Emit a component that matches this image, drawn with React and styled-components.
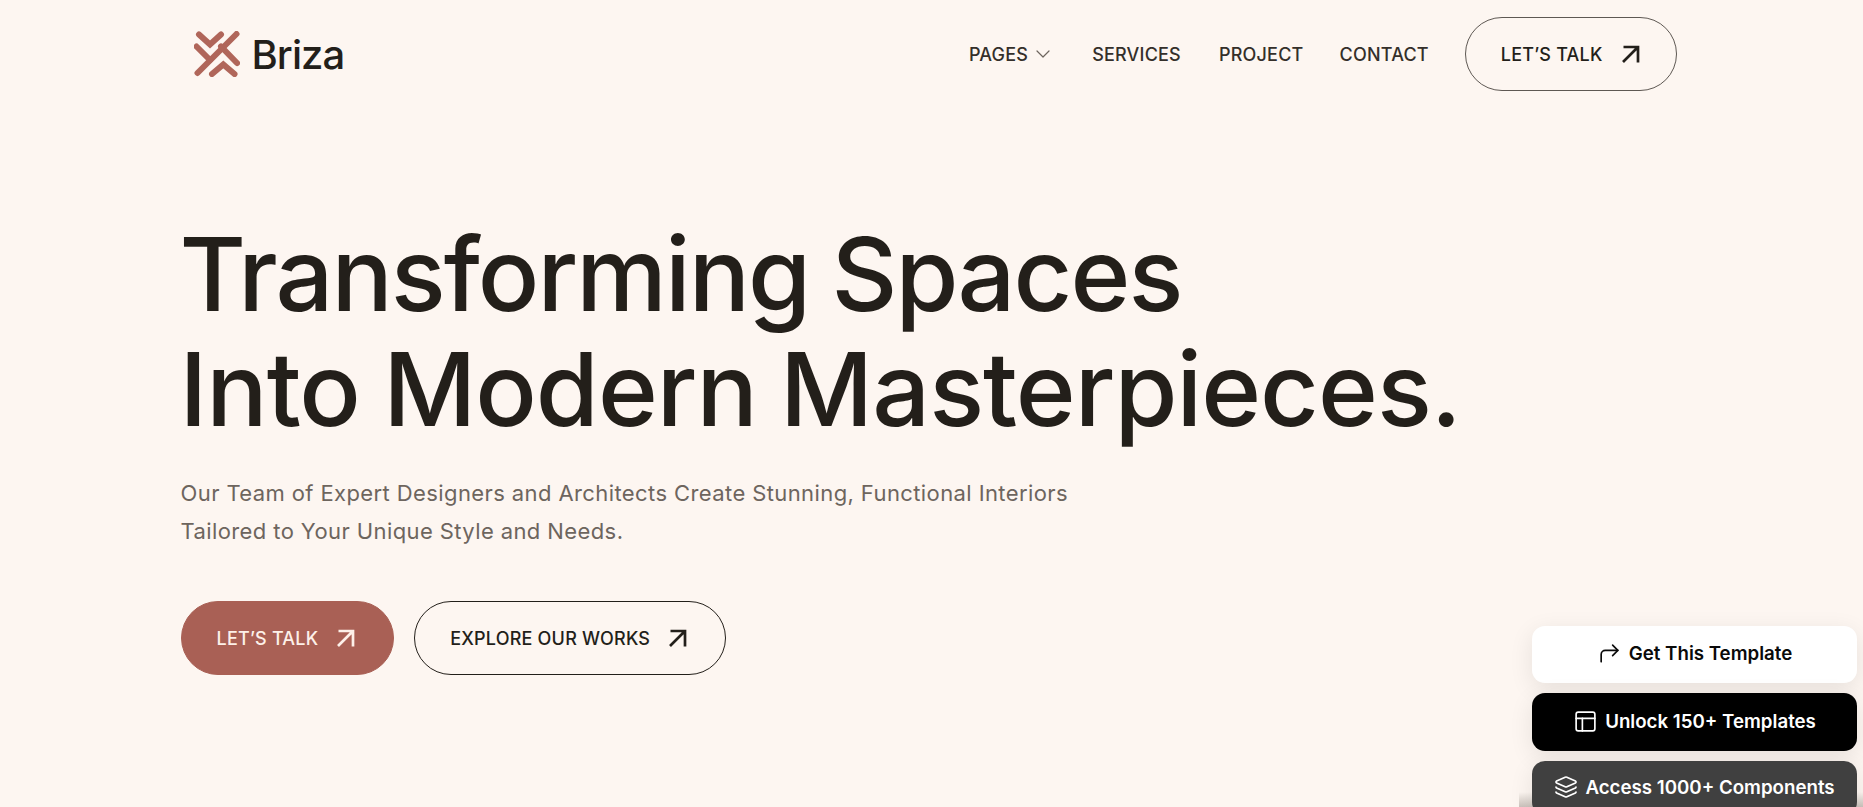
import React from "react";
import styled, { createGlobalStyle } from "styled-components";
import { ChevronDown, CornerUpRight, Layers, PanelsTopLeft } from "lucide-react";

const Global = createGlobalStyle`
  html, body { margin: 0; padding: 0; height: 807px; overflow: hidden; background: #fdf6f1; }
  #root { height: 807px; }
  * { box-sizing: border-box; }
`;
const Page = styled.div`
  position: relative; height: 807px; overflow: hidden; background: #fdf6f1; color: #231f1a;
  font-family: "Inter", "Liberation Sans", sans-serif;
`;
const Container = styled.div`width: 1502px; margin: 0 auto;`;
const Header = styled.header`
  height: 108px; display: flex; align-items: center; justify-content: space-between; padding: 0 6px 0 13px;
`;
const Brand = styled.div`display: flex; align-items: center; gap: 12px;`;
const BrandName = styled.span`font-size: 40px; font-weight: 500; letter-spacing: -0.9px; color: #231f1a;`;
const Nav = styled.nav`display: flex; align-items: center;`;
const NavLink = styled.a`
  display: flex; align-items: center; gap: 3px; font-size: 18px; font-weight: 500; letter-spacing: 0.2px;
  text-transform: uppercase; margin-right: ${p => p.$gap}px; color: #342f2a;
  svg { color: #6d655e; margin-right: -6px; }
`;
const Hero = styled.section`padding-top: 109px;`;
const Title = styled.h1`
  margin: 0 0 0 -1px; font-size: 102px; line-height: 115px; font-weight: 500; color: #231f1a;
`;
const TitleLine = styled.span`display: block; letter-spacing: ${p => p.$track}px; word-spacing: -3px;`;
const Lead = styled.p`
  margin: 27px 0 0; font-size: 22px; line-height: 38px; font-weight: 400; color: #6d655e; letter-spacing: 0.4px;
`;
const Actions = styled.div`display: flex; gap: 20px; margin-top: 51px;`;
const Pill = styled.a`
  height: 74px; display: inline-flex; align-items: center; gap: 19px; padding: 0 36px 0 35px; border-radius: 37px;
  font-size: 18px; font-weight: 500; letter-spacing: 0.2px; text-transform: uppercase;
  border: 1px solid ${p => p.$filled ? "#a96055" : p.$soft ? "#5e5853" : "#231f1a"};
  background: ${p => p.$filled ? "#a96055" : "transparent"}; color: ${p => p.$filled ? "#fdf0e9" : "#231f1a"};
`;
const ActionPill = styled(Pill)`padding: 0 38px 0 35px;`;
const Floating = styled.aside`
  position: absolute; left: 1532px; top: 626px; width: 325px; display: flex; flex-direction: column; gap: 10px;
  &::before {
    content: ""; position: absolute; left: -13px; right: -6px; top: 166px; height: 15px;
    background: linear-gradient(rgba(70,60,50,0), rgba(70,60,50,.28));
  }
`;
const FloatBtn = styled.a`
  position: relative; height: ${p => p.$h}px; border-radius: 13px; display: flex; align-items: center; justify-content: center; gap: 7px;
  padding-bottom: 2px; font-weight: 600; font-size: 18.7px; flex: none;
  background: ${p => p.$bg}; color: ${p => p.$fg};
  box-shadow: 0 6px 24px rgba(0,0,0,.09);
`;

const Arrow = () => (
  <svg width="18" height="18" viewBox="0 0 18 18" fill="none" stroke="currentColor" strokeWidth="2.7">
    <path d="M1 17 16 2M1.5 2H16V17.5" />
  </svg>
);
const Logo = () => (
  <svg width="46" height="46" viewBox="0 0 46 46" fill="none" stroke="#b0665a" strokeWidth="6" strokeLinejoin="miter" strokeLinecap="round">
    <path d="M5 3.5 16 13.5 27 3.5" />
    <path d="M42.5 3 3.5 42" />
    <path d="M2.5 15.5 16 29" />
    <path d="M27 15.5 43 32" />
    <path d="M18 43 29.3 33.5 40.5 43" />
  </svg>
);

export default function App() {
  return (
    <Page>
      <Global />
      <Container>
        <Header>
          <Brand><Logo /><BrandName>Briza</BrandName></Brand>
          <Nav>
            <NavLink $gap={43}>Pages <ChevronDown size={24} strokeWidth={1.2} /></NavLink>
            <NavLink $gap={38}>Services</NavLink>
            <NavLink $gap={36}>Project</NavLink>
            <NavLink $gap={36}>Contact</NavLink>
            <Pill $soft>Let’s Talk <Arrow /></Pill>
          </Nav>
        </Header>
        <Hero>
          <Title>
            <TitleLine $track={-1.95}>Transforming Spaces</TitleLine>
            <TitleLine $track={-1.0}>Into Modern Masterpieces.</TitleLine>
          </Title>
          <Lead>Our Team of Expert Designers and Architects Create Stunning, Functional Interiors<br />Tailored to Your Unique Style and Needs.</Lead>
          <Actions>
            <ActionPill $filled>Let’s Talk <Arrow /></ActionPill>
            <ActionPill>Explore Our Works <Arrow /></ActionPill>
          </Actions>
        </Hero>
      </Container>
      <Floating>
        <FloatBtn $h={57} $bg="#fff" $fg="#0a0a0a"><CornerUpRight size={25} strokeWidth={1.6} />Get This Template</FloatBtn>
        <FloatBtn $h={58} $bg="#000" $fg="#fff"><PanelsTopLeft size={25} strokeWidth={1.6} />Unlock 150+ Templates</FloatBtn>
        <FloatBtn $h={54} $bg="#404040" $fg="#fff"><Layers size={24} strokeWidth={1.7} />Access 1000+ Components</FloatBtn>
      </Floating>
    </Page>
  );
}
